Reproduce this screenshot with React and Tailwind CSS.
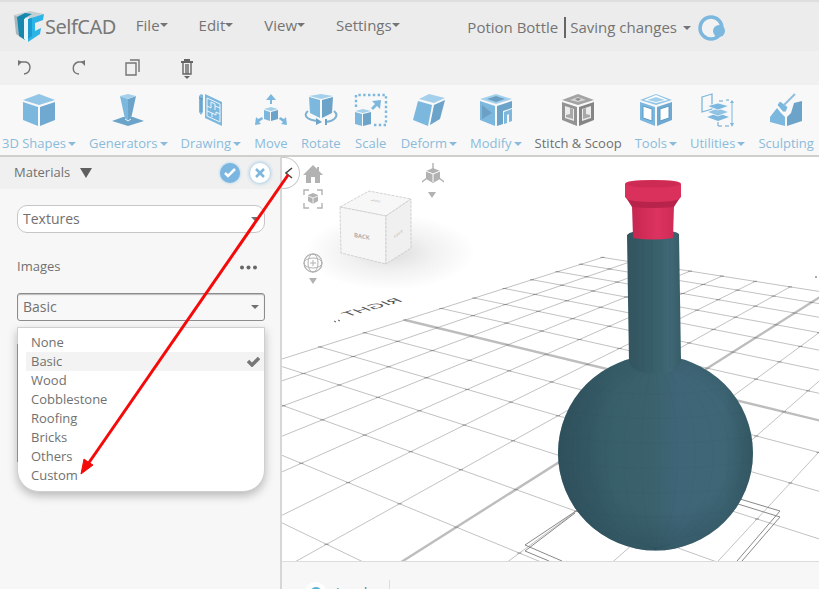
import { useState } from "react";

const BLUE = "#7cb7de";

const MENUS = ["File", "Edit", "View", "Settings"];
const MATERIALS = ["None", "Basic", "Wood", "Cobblestone", "Roofing", "Bricks", "Others", "Custom"];

const Caret = () => (
  <svg width="8" height="4" viewBox="0 0 8 4" fill="currentColor" aria-hidden="true">
    <path d="M0 0h8L4 4z" />
  </svg>
);

const Icon = ({ children }) => (
  <svg width="34" height="34" viewBox="0 0 34 34" aria-hidden="true">
    {children}
  </svg>
);

const Cube = ({ top = "#92c5e6", left = BLUE, right = "#6fa9d2" }) => (
  <>
    <path d="M17 1 33 7 17 12 1 7z" fill={top} />
    <path d="M1 9l15 5v19L1 27z" fill={left} />
    <path d="M33 9l-15 5v19l15-6z" fill={right} />
  </>
);

const ShapesIcon = () => <Icon><Cube /></Icon>;

const GeneratorsIcon = () => (
  <Icon>
    <path d="M1 28l11-4h10l11 4-16 5z" fill="#6ba3c9" />
    <path d="M9 3l8 3v22l-3-2z" fill={BLUE} />
    <path d="M25 3l-8 3v22l3-2z" fill="#6ba3c9" />
    <path d="M9 3l8-2 8 2-8 3z" fill="#a5d0ec" />
    <path d="M14 26l3 2 3-2" stroke="#e8f3fa" fill="none" />
  </Icon>
);

const DrawingIcon = () => (
  <Icon>
    <path d="M5 3l2-2 2 1v17l-2 3-2-3z" fill={BLUE} />
    <path d="M5 5l4 1M7 6v13" stroke="#5f94b8" fill="none" />
    <path d="M11 1l17 8v24l-17-8z" fill={BLUE} />
    <path d="M13 5l13 6v18l-13-6zM13 13l4 2V9l4 2v6M13 18l5 2v4M21 13l5 2M18 20l4 2v-3l4 2" fill="none" stroke="#eef6fb" />
  </Icon>
);

const MoveIcon = () => (
  <Icon>
    <g fill={BLUE}>
      <path d="M17 1l5 6h-4v4h-2V7h-4z" />
      <path d="M1 32l1-8 2 2 4-2 1 2-4 3 2 2zM33 32l-1-8-2 2-4-2-1 2 4 3-2 2z" />
      <path d="M10 17l6 2v9l-6-2z" />
    </g>
    <path d="M17 14l7 2-7 2-7-2z" fill="#a5d0ec" />
    <path d="M24 17l-7 2v9l7-2z" fill="#6ba3c9" />
  </Icon>
);

const RotateIcon = () => (
  <Icon>
    <path d="M5 4l11 3v18L6 20z" fill={BLUE} />
    <path d="M29 4L18 7v18l10-5z" fill="#6ba3c9" />
    <path d="M5 3l12-2 12 2-12 3z" fill="#a5d0ec" />
    <path d="M4 18c-5 4-2 9 10 10M30 18c5 4 2 10-9 11" stroke="#7fb0d0" strokeWidth="2" fill="none" />
    <path d="M12 25l6 4-6 3zM21 26h2v6h-2z" fill="#6ba3c9" />
  </Icon>
);

const ScaleIcon = () => (
  <Icon>
    <path d="M2 14V2h30v30H18" fill="none" stroke={BLUE} strokeWidth="2.4" strokeDasharray="2.4 2.4" />
    <path d="M18 8l9-1-1 9-3-3-4 4-2-2 4-4z" fill={BLUE} />
    <path d="M1 19l7 2v12l-7-2z" fill={BLUE} />
    <path d="M17 19l-8 2v12l8-2z" fill="#6ba3c9" />
    <path d="M9 16l8 2-8 2-8-2z" fill="#a5d0ec" />
  </Icon>
);

const DeformIcon = () => (
  <Icon>
    <path d="M17 1l16 4-11 5L7 6z" fill="#a5d0ec" />
    <path d="M6 8l14 4-4 21-15-6z" fill={BLUE} />
    <path d="M33 7l-11 5-4 20 10-6z" fill="#6ba3c9" />
  </Icon>
);

const ModifyIcon = () => (
  <Icon>
    <path d="M17 1l16 5-16 5L1 6z" fill="#a5d0ec" />
    <path d="M17 3l9 3-9 3-9-3z" fill="#6ba0c4" />
    <path d="M1 8l15 5v20L1 27z" fill={BLUE} />
    <path d="M3 12l10 8-10 6z" fill="#6ba0c4" />
    <path d="M33 8l-15 5v20l6-2V18l9-3z" fill="#6ba3c9" />
    <path d="M33 16l-8 3v12l3-1v-8l2-1v8l3-1z" fill={BLUE} />
  </Icon>
);

const StitchIcon = () => (
  <Icon>
    <Cube top="#a3a3a3" left="#939393" right="#858585" />
    <path d="M17 4l8 3-8 2-8-2z" fill="#d5d5d5" />
    <path d="M17 5l3 1-3 2-3-2z" fill="#8c8c8c" />
    <path d="M4 13l9 3v12l-9-3zM30 13l-9 3v12l9-3z" fill="#ececec" />
    <path d="M9 15l3 1v10l-7-2v-2l4-1zM25 15l-3 1v10l7-2v-2l-4-1z" fill="#a8a8a8" />
  </Icon>
);

const ToolsIcon = () => (
  <Icon>
    <Cube />
    <path d="M17 2l12 5-12 3L5 7z" fill="#fff" />
    <path d="M17 4l9 3-9 2-9-2z" fill="#a5d0ec" />
    <path d="M4 13l9 3v12l-9-3zM30 13l-9 3v12l9-3z" fill="#fff" stroke="#5f9cc6" />
  </Icon>
);

const UtilitiesIcon = () => (
  <Icon>
    <path d="M1 4l10-3v15L1 19z" fill="none" stroke={BLUE} strokeWidth="1.3" />
    <path d="M6 24l11 4 11-4-11-4z" fill={BLUE} />
    <path d="M6 19l11 4 11-4-11-4z" fill="#8fc2e3" stroke="#fff" strokeWidth=".7" />
    <path d="M6 13l11 4 11-4-11-3z" fill={BLUE} stroke="#fff" strokeWidth=".7" />
    <path d="M18 8h4M25 7h3M17 29v4h4M24 33h4" stroke="#6ba3c9" fill="none" />
    <path d="M31 8v24" stroke={BLUE} />
    <path d="M29 10l2-3 2 3zM29 30l2 4 2-4z" fill={BLUE} />
  </Icon>
);

const SculptingIcon = () => (
  <Icon>
    <path d="M1 24l7-9 4 5 4 4v9L1 29z" fill={BLUE} />
    <path d="M33 8l-8 2-3 10-4 4v9l15-5z" fill="#6ba3c9" />
    <path d="M8 12l3-4 8 6-2 5h-3z" fill={BLUE} stroke="#fff" strokeWidth=".8" />
    <path d="M15 12L26 1" stroke="#8fbfdf" strokeWidth="2" />
  </Icon>
);

const TOOLS = [
  { label: "3D Shapes", icon: ShapesIcon, menu: true },
  { label: "Generators", icon: GeneratorsIcon, menu: true },
  { label: "Drawing", icon: DrawingIcon, menu: true },
  { label: "Move", icon: MoveIcon },
  { label: "Rotate", icon: RotateIcon },
  { label: "Scale", icon: ScaleIcon },
  { label: "Deform", icon: DeformIcon, menu: true },
  { label: "Modify", icon: ModifyIcon, menu: true },
  { label: "Stitch & Scoop", icon: StitchIcon, active: true },
  { label: "Tools", icon: ToolsIcon, menu: true },
  { label: "Utilities", icon: UtilitiesIcon, menu: true },
  { label: "Sculpting", icon: SculptingIcon },
];

const Logo = () => (
  <a href="#home" className="flex items-center gap-px" aria-label="SelfCAD">
    <svg width="30" height="32" viewBox="0 0 30 32" aria-hidden="true">
      <path d="M0 4L16 0l14 3-14 5z" fill="#c4cfd4" />
      <path d="M0 4l5 2 3 21-6-4z" fill="#aab7bd" />
      <path d="M3 6l8-4 7 1-7 4v22l-6-4z" fill="#1688ad" />
      <path d="M10 8l5-2v25l-5-3z" fill="#e9f5fa" />
      <path d="M14 8l16-5-1 6-8 3v8l6-3-1 6-12 8z" fill="#2cb4e6" />
      <path d="M14 8l4-1v18l-4 3z" fill="#1b9bd0" />
    </svg>
    <span className="font-['Noto_Sans'] text-[20px] tracking-tight text-[#787878]">SelfCAD</span>
  </a>
);

const Header = () => (
  <header className="flex h-[51px] items-center border-t-2 border-[#dedede] bg-[#ececec] pl-[14px] text-[15px] text-[#747474]">
    <Logo />
    <nav className="ml-5 flex gap-[31px] pb-[3px]">
      {MENUS.map((name) => (
        <button key={name} type="button" className="flex items-center">
          {name}
          <Caret />
        </button>
      ))}
    </nav>
    <div className="ml-auto flex items-center pt-[2px] pr-[94px]">
      <span>Potion Bottle</span>
      <span className="mr-1 ml-1.5 h-[21px] w-[2px] bg-[#666]" />
      <button type="button" className="flex items-center gap-1.5">
        Saving changes
        <Caret />
      </button>
      <svg className="ml-[7px]" width="27" height="26" viewBox="0 0 27 26" aria-hidden="true">
        <circle cx="13" cy="13" r="11" fill="#f2f2f2" stroke={BLUE} strokeWidth="3.5" />
        <circle cx="21" cy="16" r="6" fill={BLUE} />
      </svg>
    </div>
  </header>
);

const EditBar = () => (
  <div className="flex h-[34px] items-center gap-[30px] bg-[#f0f0f0] pl-[13px] text-[#747474]">
    <button type="button" aria-label="Undo">
      <svg width="24" height="24" viewBox="0 0 24 24" fill="none" stroke="currentColor" strokeWidth="1.4">
        <path d="M6 6h7c6 2 5 11-2 12" />
        <path d="M5 4v6l4-4z" fill="currentColor" stroke="none" />
      </svg>
    </button>
    <button type="button" aria-label="Redo">
      <svg width="24" height="24" viewBox="0 0 24 24" fill="none" stroke="currentColor" strokeWidth="1.4">
        <path d="M17 6h-6C5 8 4 17 12 18" />
        <path d="M18 4v6l-4-4z" fill="currentColor" stroke="none" />
      </svg>
    </button>
    <button type="button" aria-label="Copy">
      <svg width="24" height="24" viewBox="0 0 24 24" fill="none" stroke="currentColor" strokeWidth="1.4">
        <path d="M5 7h10v12H5zM9 4h9v12" />
      </svg>
    </button>
    <button type="button" aria-label="Delete">
      <svg width="24" height="24" viewBox="0 0 24 24" fill="none" stroke="#666" strokeWidth="1.4">
        <path d="M6 6h12M9 4h6" strokeWidth="2" />
        <path d="M8 7v11h8V7M11 8v10M13 8v10" />
        <path d="M9 20h6l-3 3z" fill="#666" stroke="none" />
      </svg>
    </button>
  </div>
);

const Ribbon = () => (
  <div className="flex h-[72px] items-start justify-between border-b-2 border-[#cfcfcb] bg-[#f8f8f8] pt-2 pr-[5px] pl-[2px]">
    {TOOLS.map(({ label, icon: ToolIcon, menu, active }) => (
      <button
        key={label}
        type="button"
        className={`flex flex-col items-center gap-2 text-[13px] leading-[17px] whitespace-nowrap ${active ? "text-[#6f6f6f]" : "text-[#8bbbdb]"}`}
      >
        <ToolIcon />
        <span className="flex items-center gap-[2px]">
          {label}
          {menu && <Caret />}
        </span>
      </button>
    ))}
  </div>
);

const Panel = () => {
  const [kind, setKind] = useState("Textures");
  const [material, setMaterial] = useState("Basic");

  return (
    <aside className="w-[282px] shrink-0 border-r-2 border-[#d6d6d6] bg-[#f7f7f7] text-[#717171]">
      <div className="flex h-8 items-center bg-[#f0f0f0] pr-2.5 pl-[14px] text-[13px]">
        <h2>Materials</h2>
        <svg className="ml-2.5" width="12" height="10" viewBox="0 0 12 10" fill="#5f5f5f" aria-hidden="true">
          <path d="M0 0h12L6 10z" />
        </svg>
        <button type="button" aria-label="Apply" className="ml-auto flex size-5 items-center justify-center rounded-full bg-[#7ab6e0] shadow-[0_0_3px_#9ccbea]">
          <svg width="12" height="10" viewBox="0 0 12 10" fill="none" stroke="#fff" strokeWidth="2.5">
            <path d="M1 5l3 3 7-7" />
          </svg>
        </button>
        <button type="button" aria-label="Cancel" className="ml-2.5 flex size-5 items-center justify-center rounded-full bg-white shadow-[0_0_4px_#7ab6e0]">
          <svg width="10" height="10" viewBox="0 0 10 10" fill="none" stroke={BLUE} strokeWidth="2.5">
            <path d="M1 1l8 8M9 1L1 9" />
          </svg>
        </button>
      </div>

      <div className="pt-4 pr-[15px] pl-[17px] text-[14px]">
        <div className="relative">
          <select
            aria-label="Material kind"
            value={kind}
            onChange={(e) => setKind(e.target.value)}
            className="block h-7 w-full appearance-none rounded-[10px] border border-[#c6c6c6] bg-white pb-[2px] pl-[5px]"
          >
            <option>Textures</option>
            <option>Colors</option>
          </select>
          <span className="pointer-events-none absolute top-3 right-1.5"><Caret /></span>
        </div>

        <div className="mt-6 flex h-5 items-center justify-between pr-2 text-[13px]">
          <label htmlFor="images">Images</label>
          <button type="button" aria-label="More">
            <svg width="17" height="5" viewBox="0 0 17 5" fill="#666">
              <circle cx="2" cy="2.5" r="2" />
              <circle cx="8.5" cy="2.5" r="2" />
              <circle cx="15" cy="2.5" r="2" />
            </svg>
          </button>
        </div>

        <div className="relative mt-4">
          <select
            id="images"
            value={material}
            onChange={(e) => setMaterial(e.target.value)}
            className="block h-7 w-full appearance-none rounded-[3px] border border-[#8c8c8c] bg-[#f8f8f8] pb-px pl-[5px] shadow-[inset_0_1px_1px_#bbb]"
          >
            {MATERIALS.map((name) => <option key={name}>{name}</option>)}
          </select>
          <span className="pointer-events-none absolute top-3 right-1.5"><Caret /></span>

          <ul className="absolute top-[34px] right-0 left-0 rounded-b-[22px] border border-[#cfcfcf] bg-white pt-[5px] pb-1.5 pl-2 text-[13px] shadow-[0_4px_10px_rgba(0,0,0,0.25)]">
            {MATERIALS.map((name) => (
              <li key={name}>
                <button
                  type="button"
                  onClick={() => setMaterial(name)}
                  className={`flex h-[19px] w-full items-center justify-between pr-1 pl-[5px] ${name === material ? "bg-[#f3f3f3]" : ""}`}
                >
                  {name}
                  {name === material && (
                    <svg width="13" height="11" viewBox="0 0 13 11" fill="none" stroke="#777" strokeWidth="3.5" aria-hidden="true">
                      <path d="M1 5l4 4 7-7" />
                    </svg>
                  )}
                </button>
              </li>
            ))}
            <li aria-hidden="true" className="absolute top-4 -left-px h-[118px] w-px bg-[#5b9cc0]" />
          </ul>
        </div>
      </div>
    </aside>
  );
};

// perspective of the work plane, i goes away from the camera and j to the right
const project = (i, j) => {
  const d = 0.0504 * i - 0.0285 * j + 1;
  return [(58.6 * i + 19.76 * j + 405) / d, (4.03 * i - 1.53 * j + 320) / d];
};

const GridLine = ({ from, to, major }) => {
  const [x1, y1] = project(...from);
  const [x2, y2] = project(...to);
  return <line x1={x1} y1={y1} x2={x2} y2={y2} stroke={major ? "#bdbdbd" : "#c2c2c2"} strokeWidth={major ? 2.4 : 1} />;
};

const STEPS = Array.from({ length: 15 }, (_, n) => n);

const Grid = () => (
  <g>
    {STEPS.map((n) => <GridLine key={`i${n}`} from={[n - 7, 0]} to={[n - 7, 14]} major={n === 7} />)}
    {STEPS.map((n) => <GridLine key={`j${n}`} from={[-7, n]} to={[7, n]} major={n === 7} />)}
    {STEPS.map((a) =>
      STEPS.map((b) => {
        const [x, y] = project(a - 7, b);
        return <path key={`${a}-${b}`} d={`M${x - 2} ${y}h4`} stroke="#8f8f8f" />;
      })
    )}
  </g>
);

const FACETS = [-84, -68, -50, -32, -14, 4, 22, 40, 58, 74, 88];

const Bottle = () => (
  <g>
    <circle cx="655.5" cy="453" r="97.5" fill="url(#body)" />
    <circle cx="655.5" cy="453" r="97.5" fill="url(#rim)" />
    <g fill="none" stroke="#24434f" strokeOpacity=".05">
      {FACETS.map((x) => (
        <path key={x} d={`M655.5 362C${655.5 + x * 1.33} 390 ${655.5 + x * 1.33} 520 655.5 549`} />
      ))}
      {[388, 412, 437, 462, 487, 511, 532].map((y) => {
        const half = Math.sqrt(97 * 97 - (y - 453) * (y - 453));
        return <path key={y} d={`M${655.5 - half} ${y}Q655.5 ${y + 13} ${655.5 + half} ${y}`} />;
      })}
    </g>
    <path d="M627 235q4-5 26-4 22-1 26 3l2 126q-2 14-26 14-22 0-26-12z" fill="url(#neck)" />
    <path d="M635 238v128M643 239v132M652 239v134M661 239v133M670 239v129" stroke="#25454f" strokeOpacity=".1" fill="none" />
    <path d="M632 205h42l-1 33q-20 3-40 0z" fill="url(#cork)" />
    <path d="M625 184q0-4 28-4t28 4v13l-7 8q-21 3-42 0l-7-8z" fill="#d9305c" />
    <ellipse cx="653" cy="184" rx="27" ry="3.5" fill="#cd2a54" />
    <path d="M627 199q5 3 26 3t26-3l-5 8q-21 2-42 0z" fill="#b8234c" />
  </g>
);

const ViewCube = () => (
  <g>
    <ellipse cx="390" cy="252" rx="85" ry="38" fill="url(#shade)" />
    <g stroke="#c8c8c8" strokeDasharray="3 1" strokeWidth=".8">
      <path d="M340 207l29-16 42 8-25 17z" fill="#f7f7f7" />
      <path d="M340 207l46 9v48l-45-11z" fill="#f6f6f6" />
      <path d="M386 216l25-17v49l-25 16z" fill="#f0f0f0" />
    </g>
    <g fill="#a5a5a5" fontSize="6" fontWeight="600">
      <text transform="matrix(1 .2 0 1 354 237)">BACK</text>
      <text transform="matrix(1 -.6 0 1 394 238)" fontSize="4" fill="#bdbdbd">LEFT</text>
      <text transform="matrix(-1 -.2 .6 -.4 382 201)" fontSize="5" fill="#bdbdbd">TOP</text>
    </g>
  </g>
);

const Scene = () => (
  <svg
    className="absolute inset-0 h-full w-full"
    viewBox="282 157 537 404"
    preserveAspectRatio="xMidYMid slice"
    fontFamily="Open Sans, sans-serif"
    role="img"
    aria-label="Potion bottle on the work plane"
  >
    <defs>
      <linearGradient id="body">
        <stop offset="0" stopColor="#30525f" />
        <stop offset=".3" stopColor="#38606a" />
        <stop offset=".48" stopColor="#3a616c" />
        <stop offset=".62" stopColor="#3f6678" />
        <stop offset=".85" stopColor="#3e6675" />
        <stop offset="1" stopColor="#365a66" />
      </linearGradient>
      <radialGradient id="rim" cx=".55" cy=".45" r=".58">
        <stop offset=".6" stopColor="#2d4f5b" stopOpacity="0" />
        <stop offset="1" stopColor="#2d4f5b" stopOpacity=".6" />
      </radialGradient>
      <linearGradient id="neck">
        <stop offset="0" stopColor="#33545f" />
        <stop offset=".5" stopColor="#37606a" />
        <stop offset=".8" stopColor="#3f6775" />
        <stop offset="1" stopColor="#385d68" />
      </linearGradient>
      <linearGradient id="cork">
        <stop offset="0" stopColor="#c5264f" />
        <stop offset=".6" stopColor="#dd3360" />
        <stop offset="1" stopColor="#cf2b56" />
      </linearGradient>
      <radialGradient id="shade">
        <stop offset="0" stopColor="#dcdcdc" />
        <stop offset=".5" stopColor="#f1f1f1" />
        <stop offset="1" stopColor="#fff" />
      </radialGradient>
    </defs>

    <ViewCube />
    <Grid />
    <text transform="matrix(-1.2 .34 .7 .3 404 301)" fontSize="16" fill="#555">RIGHT</text>
    <path d="M334 321l2 1M338 320l2 1M815 277h2" stroke="#555" />

    {/* footprint of the bottle */}
    <g fill="none" stroke="#888">
      <path d="M579 509l-54 36 37 16M575 513l-50 38 24 10" />
      <path d="M740 499l40 12-43 50M738 504l42 13-38 44" />
    </g>
    <Bottle />
  </svg>
);

const ViewControls = () => (
  <>
    <button type="button" aria-label="Collapse panel" className="absolute top-0 -left-px flex h-8 w-[19px] items-center justify-start rounded-r-full border border-l-0 border-[#c9c9c9] bg-white pl-1">
      <svg width="8" height="12" viewBox="0 0 8 12" fill="none" stroke="#444" strokeWidth="1.5">
        <path d="M7 1L1 6l6 5" />
      </svg>
    </button>
    <div className="absolute top-2 left-[21px] flex flex-col items-center gap-1.5 text-[#b2b2b2]">
      <button type="button" aria-label="Home view">
        <svg width="20" height="18" viewBox="0 0 20 18" fill="currentColor">
          <path d="M10 0l4 4V2h2v4l4 4h-3v8h-5v-6H8v6H3v-8H0z" />
        </svg>
      </button>
      <button type="button" aria-label="Fit to view">
        <svg width="20" height="20" viewBox="0 0 20 20" fill="none" stroke="currentColor" strokeWidth="1.4">
          <path d="M1 6V1h5M14 1h5v5M19 14v5h-5M6 19H1v-5" />
          <path d="M10 4l5 2v6l-5 3-5-3V6z" fill="currentColor" stroke="none" />
          <path d="M5 7l5 2 5-2M10 9v6" stroke="#fff" strokeWidth=".8" />
        </svg>
      </button>
    </div>
    <button type="button" aria-label="Orbit" className="absolute top-24 left-[21px] text-[#b2b2b2]">
      <svg width="20" height="32" viewBox="0 0 20 32" fill="none" stroke="currentColor">
        <circle cx="10" cy="10" r="9" strokeWidth="1.3" />
        <ellipse cx="10" cy="10" rx="5" ry="9" />
        <ellipse cx="10" cy="10" rx="9" ry="5" />
        <path d="M10 7v6M7 10h6" />
        <path d="M6 25h8l-4 6z" fill="currentColor" stroke="none" />
      </svg>
    </button>
    <button type="button" aria-label="Axes" className="absolute top-1.5 left-[140px] text-[#b2b2b2]">
      <svg width="22" height="36" viewBox="0 0 22 36" fill="none" stroke="currentColor">
        <path d="M11 0v7M5 15l-5 4M17 15l5 4" strokeWidth="1.4" />
        <path d="M11 5l7 3v8l-7 4-7-4V8z" fill="currentColor" stroke="none" />
        <path d="M4 8l7 3 7-3M11 11v8" stroke="#fff" />
        <path d="M6 29h8l-4 6z" fill="currentColor" stroke="none" />
      </svg>
    </button>
  </>
);

const Footer = () => (
  <footer className="flex h-7 shrink-0 items-start overflow-hidden border-t border-[#dcdcdc] bg-[#f7f7f7] pt-[18px] text-[13px] text-[#717171]">
    <label className="flex h-10 items-start gap-2.5 border-r border-[#dcdcdc] pr-[22px] pl-[23px] leading-6">
      <span className="mt-[2px] flex size-[21px] items-center justify-center rounded-full bg-white">
        <input type="radio" name="space" defaultChecked className="size-3 appearance-none rounded-full bg-[#4fb0d6]" />
      </span>
      Local
    </label>
  </footer>
);

const App = () => (
  <div className="relative flex h-screen flex-col overflow-hidden bg-white font-['Open_Sans',sans-serif]">
    <Header />
    <EditBar />
    <Ribbon />
    <div className="flex min-h-0 flex-1">
      <Panel />
      <main className="flex min-w-0 flex-1 flex-col">
        <div className="relative flex-1 overflow-hidden">
          <Scene />
          <ViewControls />
        </div>
        <Footer />
      </main>
    </div>

    {/* pointer from the panel handle to the Custom entry */}
    <svg className="pointer-events-none absolute top-[170px] left-[78px]" width="214" height="308" viewBox="78 170 214 308" aria-hidden="true">
      <path d="M288 175L88 464" stroke="#f50a0a" strokeWidth="3" />
      <path d="M81 474l3-15 4 3 5 3z" fill="#f50a0a" stroke="#f50a0a" />
    </svg>
  </div>
);

export default App;
